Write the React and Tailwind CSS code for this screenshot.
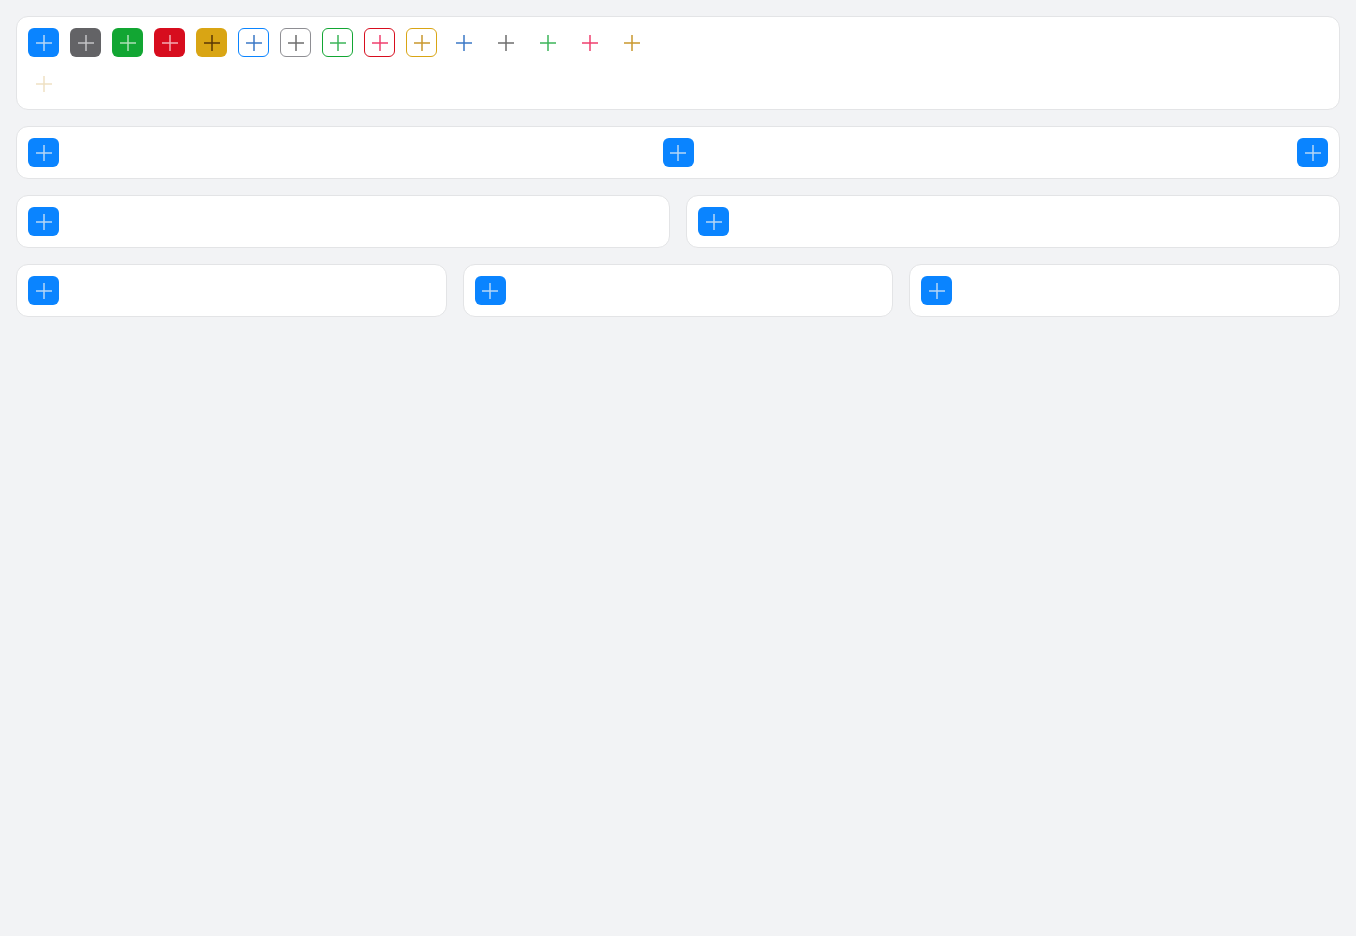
import React from "react";

const Plus = ({ className = "" }) => (
  <svg viewBox="0 0 16 16" className={`h-4 w-4 ${className}`} fill="none" stroke="currentColor" strokeWidth="1.5">
    <path d="M8 0v16M0 8h16" />
  </svg>
);

const base = "flex h-[29px] w-[31px] shrink-0 items-center justify-center rounded-[6px]";

// solid, outline and ghost variants
const variants = [
  "bg-[#0a84ff] text-[#b7d6f6]",
  "bg-[#636366] text-[#c4c4c6]",
  "bg-[#12a633] text-[#aee0b8]",
  "bg-[#d70d1e] text-[#f3acb2]",
  "bg-[#d9a514] text-[#5a3705]",
  "border border-[#0a84ff] bg-white text-[#3b78c6]",
  "border border-[#8e8e93] bg-white text-[#6e6e6e]",
  "border border-[#12a633] bg-white text-[#3db55a]",
  "border border-[#d70d1e] bg-white text-[#f0406f]",
  "border border-[#d9a514] bg-white text-[#c9982e]",
  "text-[#3b78c6]",
  "text-[#6e6e6e]",
  "text-[#3db55a]",
  "text-[#f0406f]",
  "text-[#c9982e]",
];

const Card = ({ children, className = "" }) => (
  <div className={`rounded-xl border border-[#e3e4e6] bg-white p-[11px] ${className}`}>{children}</div>
);

const PrimaryBtn = () => (
  <button className={`${base} bg-[#0a84ff] text-[#b7d6f6]`}>
    <Plus />
  </button>
);

export default function App() {
  return (
    <div className="min-h-[936px] bg-[#f2f3f5] p-4 font-['Liberation_Sans',sans-serif]">
      <div className="flex flex-col gap-4">
        <Card>
          <div className="flex flex-col gap-3">
            <div className="flex gap-[11px]">
              {variants.map((v, i) => (
                <button key={i} className={`${base} ${v}`}>
                  <Plus />
                </button>
              ))}
            </div>
            <div className="flex">
              <button className={`${base} text-[#efe1c3]`}>
                <Plus />
              </button>
            </div>
          </div>
        </Card>

        <Card className="flex justify-between">
          <PrimaryBtn />
          <PrimaryBtn />
          <PrimaryBtn />
        </Card>

        <div className="grid grid-cols-2 gap-4">
          <Card><PrimaryBtn /></Card>
          <Card><PrimaryBtn /></Card>
        </div>

        <div className="grid grid-cols-3 gap-4">
          <Card><PrimaryBtn /></Card>
          <Card><PrimaryBtn /></Card>
          <Card><PrimaryBtn /></Card>
        </div>
      </div>
    </div>
  );
}
